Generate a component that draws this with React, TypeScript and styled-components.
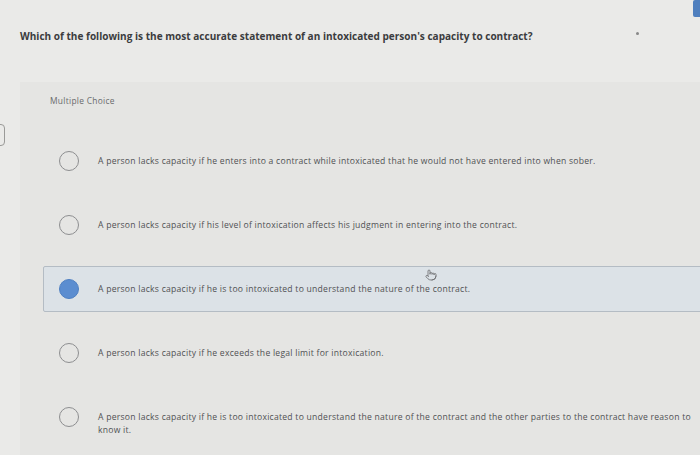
import React from 'react';
import styled, { createGlobalStyle } from "styled-components";
import { Pointer } from "lucide-react";

const GlobalStyle = createGlobalStyle`
    body {
        margin: 0;
        background: #e9e9e7;
        font-family: "Open Sans", Lato, sans-serif;
    }
`

type OptionType = {
    text: string
    selected?: boolean
}

const options: OptionType[] = [
    {text: "A person lacks capacity if he enters into a contract while intoxicated that he would not have entered into when sober."},
    {text: "A person lacks capacity if his level of intoxication affects his judgment in entering into the contract."},
    {text: "A person lacks capacity if he is too intoxicated to understand the nature of the contract.", selected: true},
    {text: "A person lacks capacity if he exceeds the legal limit for intoxication."},
    {text: "A person lacks capacity if he is too intoxicated to understand the nature of the contract and the other parties to the contract have reason to know it."},
];

export default function App() {
    return (
        <Page>
            <GlobalStyle/>
            <CornerButton/>
            <EdgeTab/>
            <Header>
                <Question>Which of the following is the most accurate statement of an intoxicated person's capacity to contract?</Question>
                <Dot/>
            </Header>
            <Panel>
                <Label>Multiple Choice</Label>
                <OptionList>
                    {options.map((o, i) => (
                        <Option key={i} $selected={!!o.selected}>
                            <Radio $selected={!!o.selected}/>
                            <OptionText>{o.text}</OptionText>
                            {o.selected && (
                                <Cursor>
                                    <Pointer size={12} strokeWidth={1.6}/>
                                </Cursor>
                            )}
                        </Option>
                    ))}
                </OptionList>
            </Panel>
        </Page>
    );
}

const Page = styled.div`
    position: relative;
    width: 700px;
    height: 455px;
    overflow: hidden;
    background: #eaeae8;
`
const CornerButton = styled.div`
    position: absolute;
    right: 0;
    top: 0;
    width: 7px;
    height: 17px;
    background: #4f7fbe;
    border-radius: 2px 0 0 2px;
`
const EdgeTab = styled.div`
    position: absolute;
    left: -8px;
    top: 124px;
    width: 11px;
    height: 20px;
    border: 1.5px solid #9a9a98;
    border-radius: 4px;
`
const Header = styled.div`
    position: relative;
    height: 82px;
    padding: 29px 20px 0;
    box-sizing: border-box;
`
const Question = styled.div`
    font-size: 10.05px;
    font-weight: 700;
    color: #3b3c3e;
    line-height: 14px;
`
const Dot = styled.div`
    position: absolute;
    left: 636px;
    top: 32px;
    width: 3px;
    height: 3px;
    border-radius: 50%;
    background: #888;
`
const Panel = styled.div`
    margin-left: 20px;
    background: #e5e5e3;
    min-height: 380px;
    padding-top: 13px;
`
const Label = styled.div`
    padding-left: 30px;
    font-size: 8.4px;
    letter-spacing: 0.3px;
    color: #6a6b6d;
    line-height: 11px;
`
const OptionList = styled.div`
    display: flex;
    flex-direction: column;
    gap: 18px;
    margin-top: 32px;
`
const Option = styled.div<{ $selected: boolean }>`
    position: relative;
    display: flex;
    align-items: flex-start;
    gap: 19px;
    min-height: 46px;
    box-sizing: border-box;
    margin-left: 23px;
    margin-right: ${p => p.$selected ? "-10px" : "0"};
    padding: 12px 0 0 15px;
    background: ${p => p.$selected ? "#dce2e7" : "transparent"};
    border: 1.5px solid ${p => p.$selected ? "#b4bcc4" : "transparent"};
    border-radius: 2px;
`
const Radio = styled.div<{ $selected: boolean }>`
    flex: none;
    width: 20px;
    height: 20px;
    box-sizing: border-box;
    border-radius: 50%;
    border: 1.5px solid ${p => p.$selected ? "#4f80c2" : "#8d8e90"};
    background: ${p => p.$selected ? "#5b8dd0" : "transparent"};
`
const OptionText = styled.div`
    max-width: 604px;
    margin-top: 4px;
    font-size: 8.6px;
    letter-spacing: 0.25px;
    line-height: 13px;
    color: #505153;
`
const Cursor = styled.div`
    position: absolute;
    left: 381px;
    top: -3px;
    color: #6a6b6d;
`
